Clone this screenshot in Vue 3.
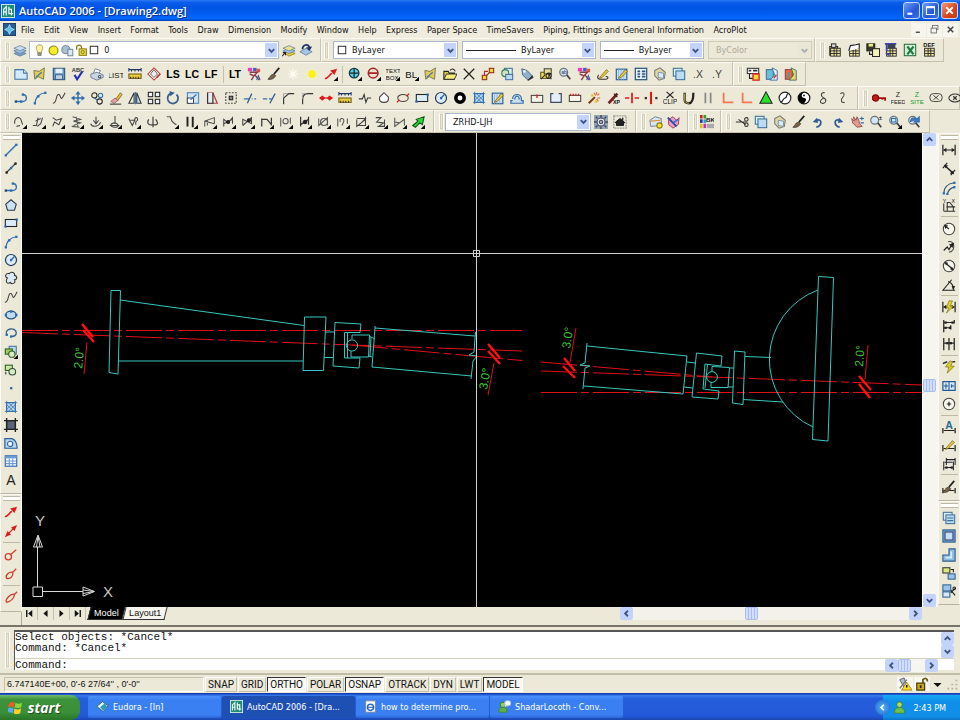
<script setup>
import { ref } from 'vue'

// Small drawing helpers: every glyph lives in a 16 x 16 box.
const p = (d, s = '#222', w = 1.2, f = 'none') => `<path d="${d}" stroke="${s}" stroke-width="${w}" fill="${f}"/>`
const r = (x, y, w, h, f = 'none', s = '#222', sw = 1.2) => `<rect x="${x}" y="${y}" width="${w}" height="${h}" fill="${f}" stroke="${s}" stroke-width="${sw}"/>`
const c = (x, y, q, f = 'none', s = '#222', sw = 1.2) => `<circle cx="${x}" cy="${y}" r="${q}" fill="${f}" stroke="${s}" stroke-width="${sw}"/>`
const e = (x, y, a, b, f = 'none', s = '#222', sw = 1.2) => `<ellipse cx="${x}" cy="${y}" rx="${a}" ry="${b}" fill="${f}" stroke="${s}" stroke-width="${sw}"/>`
const t = (x, y, v, n = 8, f = '#111', b = 400, len = 'middle') => `<text x="${x}" y="${y}" font-size="${n}" fill="${f}" font-weight="${b}" text-anchor="${len}">${v}</text>`
const dot = (x, y, f = '#2a6cb0') => `<rect x="${x - 1.2}" y="${y - 1.2}" width="2.6" height="2.6" fill="${f}"/>`
const fly = p('M16 11V16H11z', 'none', 0, '#000')

const BL = '#2f6fae', NV = '#1c3566', LB = '#bcdcf4', YE = '#e8cf3c', RD = '#e01818'
const pencil = p('M5 11L12 3L14 5L7 12L4 13z', '#6a5210', 0.8, YE)
const pages = r(1.5, 1.5, 10, 9, '#dcecf8', '#3d6f9c') + r(4.5, 4.5, 10, 10, LB, '#3d6f9c')
const hatch = r(3, 3, 10, 10, LB, BL) + p('M3 1V15M13 1V15M1 3H15M1 13H15M5 13L13 5M3 11L11 3M5 3L13 11M3 5L11 13', BL, 0.9)
const gauge = p('M1 3H15', NV, 1.4) + p('M1 5V1M15 5V1M4 3V5M8 3V5M12 3V5', NV) + r(1, 8, 14, 5, YE, '#7a5b14') + p('M3 13V11M6 13V11M9 13V11M12 13V11', '#333')
const match = r(1, 1, 5, 4, '#e83cb8', 'none') + r(7, 1, 4, 4, '#3a60d0', 'none') + r(11, 2, 4, 4, '#e05838', 'none') + p('M3 6L12 6L9 9L14 15M3 8L8 10L5 15', '#903848', 1.6) + p('M11 15L13 10L15 15', '#2b5aa8')
const openIcon = p('M1 4L7 5L13 1L12 14L6 11L2 14z', '#6a7440', 1, '#e4c95c') + p('M3 12L10 6', '#4677aa', 1.4)
const dim = p('M1 2V14M15 2V14M2 8H14', '#222', 1.4) + p('M5 5.5L1.5 8L5 10.5zM11 5.5L14.5 8L11 10.5z', 'none', 0, '#222')
const brush = p('M14 1L8 8', '#222', 2) + p('M8 8L5 9Q3 12 1 14Q7 15 10 10z', '#333', 0.8, '#7b6142')
const redArrow = p('M1 13C4 14 6 9 9 7', RD, 1.8) + p('M15 2L7 4L12 9z', 'none', 0, RD)
const mag = c(6.5, 6, 4.5, '#d2e6f6', '#6b7680', 1.4) + p('M10 9L14 14', '#444', 2)
const lay = p('M8 9L15 12L8 15L1 12z', '#54749a', 0.8, '#7da2c8') + p('M8 6L15 9L8 12L1 9z', '#54749a', 0.8, '#a4c4e0') + p('M8 3L15 6L8 9L1 6z', '#54749a', 0.8, '#c9def0')
const grid = r(3, 6, 11, 9, '#f0e6a4', '#222', 1) + p('M3 9H14M3 12H14M7 6V15M10 6V15', '#222', 1)
const wand = p('M2 14L9 7', '#7a3c14', 2.4) + p('M11 1V4M14 3L12 5M15 8H12M8 2L10 5M13 12L11 9', '#e0602a', 1.2) + dot(6, 5, '#f0c020') + dot(10, 12, '#f0c020')

const I = {
  layers: lay,
  layerState: p('M8 6L15 10L8 14L1 10z', '#54749a', 0.8, '#a4c4e0') + p('M4 7C4 2 10 0 12 5', NV, 2) + p('M12 9L8 5L15 4z', 'none', 0, NV),
  layerObj: p('M8 9L15 12L8 15L3 12z', '#8a7c10', 0.8, YE) + p('M8 6L15 9L8 12L1 9z', '#54749a', 0.8, '#a4c4e0') + p('M8 3L15 6L8 9L1 6z', '#54749a', 0.8, '#ece48c') + p('M0 15L4 11M1 11H4V14', '#222'),
  bulb: p('M8 1C4 1 3 5 5 8L6 11H10L11 8C13 5 12 1 8 1z', '#a08f2c', 1, '#fbf3a0') + r(6, 11, 4, 3, '#999', '#666', 0.8),
  sun: c(8, 8, 5.5, '#f6ee26', '#8a8420', 1.3),
  freeze: c(6, 7, 5, '#a8bfd4', '#6d8398') + r(8.5, 6.5, 6, 8, '#dde8f2', '#6d8398'),
  lock: p('M2 7V3Q5 0 8 3V7', '#8a7c10', 1.6) + r(5, 6, 9, 8, '#e7dc4a', '#8a7c10') + c(9.5, 10, 2, 'none', '#8a7c10'),
  swatch: r(2, 2, 12, 12, '#fff', '#222', 1.5),
  new: p('M1 3H11L15 7V14H1z', '#41739e', 1.2, '#d4e9fa') + p('M11 3V7H15', '#41739e', 1.2, '#fff'),
  open: openIcon,
  save: r(1.5, 1.5, 13, 13, '#6c9ac8', '#2b5278') + r(4, 2, 8, 5, '#e4f0fa', 'none') + r(4, 9, 8, 5, '#c4d4e4', '#2b5278', 0.8),
  spell: t(8, 6, 'ABC', 6.5, '#333', 700) + p('M4 9L7 14L13 5', '#2430b8', 2.4),
  print: p('M4 7L6 2L12 4L10 8', '#687890', 1, '#fff') + p('M1 8L8 6L15 9V12L8 15L1 12z', '#687890', 1, '#cbd5e2') + c(11, 11, 1.4, '#fff', '#456'),
  list: t(8, 12, 'LIST', 9, '#111'),
  gauge,
  diamond: p('M8 1L15 8L8 15L1 8z', '#b83c34', 1.2, '#fff') + p('M8 3L12 8L8 12L4 8z', '#555', 1, '#eee') + p('M11 12L15 8', '#b83c34', 2),
  LS: t(8, 13, 'LS', 12, '#000', 700), LC: t(8, 13, 'LC', 12, '#000', 700), LF: t(8, 13, 'LF', 12, '#000', 700), LT: t(8, 13, 'LT', 12, '#000', 700),
  match, brush,
  star: p('M8 2V14M2 8H14M4 4L12 12M12 4L4 12', '#fffef2', 1.3),
  sunny: p('M8 1V15M1 8H15M3 3L13 13M13 3L3 13', '#faf6a0', 1.4) + c(8, 8, 4.4, '#fbf314', 'none'),
  redArrow: redArrow + fly,
  plusC: c(7, 7, 5.5, '#58d4e4', '#173a4a', 1.4) + p('M7 2V12M2 7H12', '#222', 1.4) + fly,
  minusC: c(7, 7, 5.5, '#f0e0d4', '#a82020', 1.8) + p('M2 7H12', '#a82020', 2) + fly,
  textbox: t(8, 7, 'TEXT', 7) + t(7, 15, 'BOX', 7) + fly,
  bl: t(7, 12, 'BL', 11) + fly,
  folder: p('M1 5H6L7 7H13V14H1z', '#222', 1.2, '#dcd048') + p('M1 14L4 8H16L13 14z', '#222', 1, '#f4ec7c') + p('M8 4C10 1 13 2 14 5', '#222'),
  xx: p('M2 2L14 14M14 2L2 14', '#222', 1.4),
  nodes: r(9.5, 1.5, 5, 5, '#f2da2c', '#8c2c1c') + r(1.5, 9.5, 5, 5, '#f2da2c', '#8c2c1c') + p('M6 10L10 6M4 9V5H8', '#b03020', 1.3),
  shapes: r(5, 1.5, 9, 8, '#dcebf8', '#47719a') + c(6, 7, 4, '#cfe4c0', '#3c7a5c') + r(6.5, 8.5, 8, 6, LB, '#47719a'),
  tag: p('M2 2L8 4L14 10L9 15L3 9z', '#3d5f82', 1, '#8fb0cc') + p('M9 15L14 10L15 12L10 15z', '#333', 1, '#333') + dot(5, 5, '#fff'),
  block: r(2, 6, 9, 7, '#f3e152', '#56511a') + r(6, 2, 8, 6, '#e8dd98', '#444') + c(11, 10, 3, 'none', '#222') + p('M2 14L7 9M11 7L14 14', '#222'),
  find: mag + t(7, 8, 'ab', 6, '#235'),
  pencilC: p('M3 9C1 12 2 14 5 14H11C15 14 14 10 11 11', '#333') + pencil,
  editB: r(1.5, 2.5, 12, 12, '#cde1f3', '#31659a', 1.4) + p('M4 2V15M7 2V15M10 2V15', '#82aacb', 0.8) + pencil,
  calc: r(1.5, 1.5, 13, 13, '#eef4fa', '#2a5480', 1.4) + p('M4 5H7M9 5H13M4 8H7M9 8H13M4 11H7M9 11H13', '#2a5480', 1.8),
  paste: p('M2 4L8 1L14 6L13 13L7 15L2 10z', '#777', 1.2, '#e0d6a4') + p('M6 6L12 7L12 13L6 12z', '#6b8fae', 1, '#dcebf7'),
  pages,
  dx: t(8, 13, '.X', 12, '#444'), dy: t(8, 13, '.Y', 12, '#444'),
  sheet: r(1.5, 1.5, 13, 6, '#fff', '#333') + p('M3 4H6M8 4H13', '#333', 2) + p('M4 8V13H8', '#222') + r(8, 8, 7, 7, '#f4d838', '#d82c20', 1.6),
  doc1: r(1.5, 3, 8, 11, '#66c0d8', '#3f6f98') + p('M8 1L14 4V15H6L11 9z', '#33679a', 1, '#e6f4fb') + p('M10 13L13 9', '#d03030', 1.6),
  doc2: r(1.5, 3, 8, 11, '#e86a3c', '#983f3f') + p('M8 1L14 4V15H6L11 9z', '#336a7a', 1, '#ecd860') + p('M4 13L6 6', '#33a0c0', 1.8),
  pline: p('M2 12H10C16 12 15 4 10 4', BL, 1.6) + dot(2, 12, '#174a78') + dot(10, 4) + dot(8, 12),
  arc: p('M2 14C3 8 6 3 14 2', BL, 1.4) + dot(2, 14) + dot(14, 2) + dot(6, 6),
  spline: p('M1 14C6 14 4 3 8 4C11 6 9 14 15 2', '#444', 1.2),
  move: p('M8 1V15M1 8H15', BL, 1.6) + p('M8 0L5 4H11zM8 16L5 12H11zM0 8L4 5V11zM16 8L12 5V11z', 'none', 0, BL),
  copy: c(5, 5, 3, 'none', '#222') + c(12, 5, 2.5, 'none', BL) + c(11, 12, 3, 'none', '#222') + p('M5 8L9 11', BL),
  erase: p('M8 9L13 2L15 4L10 11z', '#6a4e10', 0.8, '#e8bd38') + p('M2 12L7 8L10 11L6 14z', '#8a5060', 0.8, '#e6a0a6') + p('M1 15H14', '#333'),
  mirror: p('M7 2V14H1z', '#333') + p('M10 2V14H15z', '#333', 1.2, LB) + p('M8.5 1V15', BL),
  array: r(1.5, 1.5, 5, 5, '#eef3f8') + r(9.5, 1.5, 5, 5, '#eef3f8') + r(1.5, 9.5, 5, 5, '#eef3f8') + r(9.5, 9.5, 5, 5, '#eef3f8'),
  rotate: p('M12 4A6 6 0 1 1 5 3', '#39618f', 2) + p('M4 0L10 2L5 6z', 'none', 0, '#39618f'),
  scale: r(1.5, 2, 13, 12, '#d0e4f6', BL, 1) + r(1.5, 8, 7, 6, '#fff', '#333', 1) + p('M5 10L12 4', BL),
  stretch: p('M3 2H9L14 14H3z', '#b83848', 1.4) + p('M3 2V14H9V2', '#333', 1.4, '#e8eef4'),
  dotted: `<rect x="2" y="2" width="12" height="12" fill="none" stroke="#444" stroke-width="1.3" stroke-dasharray="2 1.5"/>` + r(6, 6, 4, 4, '#888', '#222'),
  trim: p('M1 9H7M10 9H11M13 9H15', BL, 1.4) + p('M5 14L10 3', '#2c5c8c', 1.4),
  extend: p('M1 9H6M8 9H11', BL, 1.4) + p('M9 14L15 3', '#2c5c8c', 1.4),
  chamfer: p('M3 15V8L9 3H15', '#333', 1.3) + p('M3 7V3H8', '#999', 1),
  fillet: p('M3 15V10Q3 3 9 3H15', '#333', 1.3) + p('M3 9V3H6', '#999', 1),
  redArrows: p('M1 8H15', RD, 1.3) + p('M0 8L4 5V11zM7 8L4 5V11zM16 8L12 5V11zM9 8L12 5V11z', 'none', 0, RD),
  breakL: p('M1 9H5L7 4L9 13L11 8H15', '#333'),
  drop: p('M8 2L13 7Q14 13 8 13Q2 13 3 7z', '#444', 1.2, '#fff'),
  ellR: e(8, 8, 6, 4, 'none', '#444') + p('M1 13L4 10M12 6L15 3', RD, 1.6),
  rect: r(1.5, 4, 13, 8, '#dcebf8', '#222') + dot(1.6, 12) + dot(14.4, 4),
  circle: c(8, 8, 6.3, '#dcebf8', '#223c5c', 1.4) + p('M8 8L12 4', BL, 1.6) + dot(8, 8),
  donut: c(8, 8, 4.8, '#fff', '#000', 4),
  hatch,
  offset: p('M3 9A4.5 4.5 0 1 1 13 9V11H15V14H1V11H3', '#3a6ea5', 1.4, '#cde1f3') + p('M6 10A2.5 2.5 0 1 1 10 10', '#3a6ea5', 1.3),
  box1: r(1.5, 5, 13, 8, '#f6f4ea', '#444') + p('M8 4V8', RD, 1.5), box2: p('M5 3H2V13H14V3H11', '#3c4c66', 1.4, '#e6eef8'), box3: r(1.5, 5, 13, 7, '#f6f4ea', '#444') + p('M3 5V3M6 5V3M9 5V3M12 5V3', RD, 1.4),
  wand, wandXp: p('M3 14L13 3', '#7a1c24', 3) + p('M9 3L13 7', '#222') + t(12, 15, 'XP', 6, '#111', 700),
  brk1: p('M0 8H5M11 8H16', RD, 1.6) + p('M8 2V14', RD, 2), brk2: p('M8 1V15', RD, 2.4) + dot(2, 8, '#333') + dot(14, 8, '#333'),
  xclip: p('M4 1L12 8M12 1L4 8', '#222') + t(8, 15, 'CLIP', 7.5, '#111'),
  ucup: p('M3 2V10Q3 14 8 14Q13 14 13 2', '#222', 2.6) + p('M3 3V10Q3 14 8 14', '#d8c040', 1),
  par: p('M5 2V14M11 2V14', '#888', 2), ell: p('M3 2V13H14', '#f07850', 2),
  tri: p('M8 1L15 14H1z', '#222', 1.2, '#28e028'),
  yinO: c(8, 8, 6.7, '#fff', '#222', 1.3) + p('M12 3C9 3 11 7 8 8S5 14 3 12', '#222', 1.4),
  yin: c(8, 8, 6.7, '#000', '#111', 1.3) + p('M8 2A6 6 0 0 1 8 14C12 10 10 8 8 8C4 7 5 3 8 2z', 'none', 0, '#fff') + c(8, 5, 1, '#000', 'none'),
  eight: p('M10 2C5 1 5 6 9 8S11 15 7 14S6 9 9 8', '#444'), ess: p('M6 3C10 0 12 4 9 7S7 14 11 13', '#444'),
  key: c(4, 8, 3.6, '#c41414', '#7a0808') + p('M8 8H15V11M12 8V10', '#a01010', 2),
  zfeed: t(8, 7, 'Z', 8, '#222') + t(8, 15, 'FEED', 6.5, '#222'), zsite: t(8, 7, 'Z', 8, '#1d9c2c') + t(8, 15, 'SITE', 7, '#1d9c2c'),
  pill: `<rect x="1" y="3" width="14" height="9" rx="4" fill="none" stroke="#333"/>` + p('M5 5L11 10M11 5L5 10', '#333', 1), pill2: e(8, 8, 7, 4.5, 'none', '#333') + p('M6 6L10 10M10 6L6 10', '#333', 1.4),
  s0: p('M2 10C1 3 7 1 9 5L11 11M4 13L8 12', '#444') + fly, s1: p('M1 12L5 12L7 3M4 7L10 4M6 13L10 10L12 3', '#444') + fly,
  s2: p('M2 3L6 6L12 4L9 11L4 8L2 13', '#444') + fly, s3: p('M3 2L12 5L4 7L12 9L4 12M2 13L11 14M7 2L9 13', '#555') + fly,
  s4: p('M8 2V10M2 10C4 15 12 13 13 8M5 6L8 10L11 6', '#444') + fly, s5: p('M8 1V9C2 9 2 14 8 14S12 10 8 9M2 12H13', '#444') + fly,
  s6: p('M2 4L6 12L9 6H4M9 6C8 2 13 2 12 6L10 8V11', '#444') + fly, s7: p('M8 2V14M3 5C0 11 5 12 8 11M11 5C16 11 11 12 8 11', '#444', 1.4),
  s8: p('M2 2H6L8 7L11 10L13 11', '#555', 1.4) + fly, s9: p('M4 2V13M10 2V14', '#222', 2.2) + fly,
  s10: p('M2 13V7L13 3V10M2 7L13 10M5 6V12', '#555') + fly, s11: p('M2 13V5L7 9L12 3V10M2 10L12 5', '#444') + c(7, 8, 1.8, '#222') + fly,
  s12: p('M2 12V5L12 10V3L2 12', '#444') + c(9, 6, 1.8, '#222') + fly, s13: p('M2 4V13M2 5H8L13 11M13 3V12', '#333', 1.4) + fly,
  s14: p('M2 3V13M13 3V10', '#555') + c(7.5, 7, 3, 'none', '#555') + fly, s15: p('M3 2V13M12 2V11M3 11L12 5', '#333', 1.4) + c(8, 8, 2, '#222') + fly,
  s16: p('M2 4V12L12 3V12', '#555') + c(8, 8, 4, 'none', '#555') + fly, s17: p('M2 4V13M5 8C3 4 9 2 9 7L7 12M13 4V10', '#555') + fly,
  s18: p('M2 4L12 4L4 12H12V2M2 5V13L12 5', '#444') + fly, s19: p('M2 3H8L3 8L11 9L5 13H12V5', '#444') + fly, s20: p('M2 3V13L13 5V12M2 8L7 9', '#555') + fly,
  green: p('M2 12L8 7L6 5L15 2L13 11L10 9L5 14z', '#124c12', 1.2, '#2cd83c') + fly,
  gear: `<rect x="0" y="0" width="16" height="16" fill="#8fa4b4"/>` + c(8, 8, 4.5, '#e4ecf2', '#445') + c(8, 8, 2, '#9ab', '#445') + p('M8 0V3M8 13V16M0 8H3M13 8H16M2 2L4 4M14 2L12 4M2 14L4 12M14 14L12 12', '#445', 1.6),
  house: `<rect x="1" y="1" width="14" height="14" fill="none" stroke="#999" stroke-width="1.6" stroke-dasharray="2 1"/>` + p('M3 8L8 4L13 8V9H12V12H4V9H3z', '#111', 1, '#222') + p('M11 3V6', '#222', 1.6),
  dcenter: p('M1 6L7 2L14 4V12L2 13z', '#667a98', 1, '#dce4ee') + c(12, 12, 3, '#f6e33a', '#8a7a10') + p('M2 7L13 6', '#e09030'),
  heart: p('M3 5L8 2L12 6L15 3L14 11L8 15L3 11z', '#b02a58', 1, '#e8a0c0') + p('M2 3L8 9L12 13', '#2848a8', 2) + p('M14 5L8 9', '#3868d0', 2),
  palette: r(0, 0, 3, 4, '#d02020', 'none') + r(4, 0, 3, 4, '#20a030', 'none') + r(0, 5, 3, 4, '#2030c0', 'none') + r(4, 5, 3, 4, '#20a8c0', 'none') + r(0, 10, 3, 5, '#e0c020', 'none') + r(4, 10, 3, 5, '#c030c0', 'none') + r(8, 10, 8, 5, '#aaa', 'none') + t(12, 8, 'BK', 7, '#111', 700),
  cut: p('M1 8H12M4 5L12 11', '#333', 1.3) + c(13, 5, 2, 'none', '#333') + c(13, 11, 2, 'none', '#333'),
  undo: p('M6 14C13 12 13 4 6 6', '#2c5896', 2) + p('M2 8L7 3L8 9z', 'none', 0, '#2c5896'), redo: p('M10 14C3 12 3 4 10 6', '#2c5896', 2) + p('M14 8L9 3L8 9z', 'none', 0, '#2c5896'),
  pan: p('M2 4L5 7L4 2L7 6L8 2L10 6L11 10L14 13L8 14L3 9z', '#8a4c48', 1, '#e09a90') + p('M11 4H16M13.5 2V6M12 9H16', BL, 1.3),
  zoomR: mag + t(13, 6, '±', 7, '#111', 700), zoomW: mag + r(4, 4, 5, 4, 'none', BL) + fly, zoomP: mag + p('M4 8C4 3 9 2 11 5L14 2V8H8L10 6', BL, 1.2, '#4678b4'),
  x1: r(2, 4, 9, 10, '#c8ba6c', '#333') + r(4, 1, 5, 4, '#ddd', '#333') + grid, x2: grid + p('M2 9L4 3L10 2L14 1V6', '#222', 1.3, '#fff'),
  x3: r(1, 1, 9, 8, '#3a3a2a', '#222') + r(3, 1, 5, 3, '#f2ec88', 'none') + r(7.5, 6.5, 8, 9, '#f4f0bb', '#222') + p('M4 10V13H7', '#222'), x4: grid + p('M1 1H14M3 1V9M2 11L6 14', '#3b48b8', 2) + r(4, 1, 9, 5, '#3c4050', 'none'),
  x5: r(1.5, 1.5, 13, 13, '#d6ecd9', '#287040') + p('M5 4L12 13M12 4L5 13', '#1d7c3c', 2.4), x6: t(8, 5, 'DEF', 6.5, '#111', 700) + grid,
  line: p('M2 14L14 2', BL, 1.6) + dot(2, 14) + dot(14, 2), xline: p('M2 14L14 2', '#3c4750', 1.4) + dot(3, 13, '#222') + dot(13, 3, '#222') + dot(8, 8),
  polygon: p('M8 2L14 7L12 14H4L2 7z', '#2b3b50', 1.3, '#cfe0f2'), cloud: p('M4 8C0 7 2 2 6 3C8 0 13 2 12 5C16 6 15 10 12 10C14 14 9 16 7 13C4 16 1 12 4 8z', '#333', 1.2, '#dceaf6'),
  ellipse: e(8, 8, 6, 4.4, LB, '#27507c', 1.6) + dot(2, 8) + dot(14, 8) + dot(8, 4), earc: p('M3 10C0 2 14 1 14 8C14 12 10 12 8 12', '#39618f', 1.6) + dot(3, 10) + dot(8, 12),
  insert: r(6, 1.5, 8, 9, LB, '#47719a') + r(1.5, 4.5, 8, 6, '#9bd05c', '#2d5a1c') + c(9, 10.5, 3.6, '#d9ecc4', '#2d5a1c') + fly,
  mkblock: r(1.5, 2.5, 8, 6, '#cde7a8', '#2d5a1c') + c(9.5, 10, 3.8, '#d9ecc4', '#2d4a3c') + p('M2 10V13', '#333'),
  point: r(7, 7, 2.5, 2.5, '#1d5c8c', 'none'),
  gradient: r(3, 3, 10, 10, '#5a6478', '#222') + p('M3 0V16M13 0V16M0 3H16M0 13H16', '#222', 1.6),
  region: p('M1 14V3H9Q15 5 15 14z', '#2d6298', 1.4, '#b8d4ee') + c(7, 9, 3, '#f1f6fb', '#2d6298'),
  table: r(1.5, 2, 13, 12, '#fff', '#3a70b8', 1.4) + r(1.5, 2, 13, 3, '#6c9cd4', 'none') + p('M2 8H14M2 11H14M6 5V14M10 5V14', '#6c9cd4'),
  A: t(8, 14, 'A', 16, '#222'),
  rArrow: redArrow, rArrow2: p('M3 13L13 3', RD, 1.4) + p('M15 1L8 4L12 8zM1 15L8 12L4 8z', 'none', 0, RD),
  rC1: c(5, 10, 3.6, 'none', '#d04030', 1.5) + p('M7 8L14 2', '#d04030', 1.5), rC2: p('M3 13C1 9 6 5 10 6C11 11 7 14 3 13zM10 6L14 2', '#d04030', 1.5), rC3: p('M3 14C0 12 8 3 12 5C12 9 7 14 3 14zM11 6L15 2', '#d04030', 1.5),
  dLin: dim, dAl: p('M3 4L13 13', '#222', 1.6) + p('M1 7L6 1M10 15L15 9', '#222', 1.3) + p('M2 3L7 4L4 7zM14 14L9 13L12 10z', 'none', 0, '#222'),
  dArc: p('M2 14C2 8 6 3 14 2M6 15C7 11 9 8 14 7', '#29536f', 1.4) + dot(14, 2) + dot(14, 7) + dot(2, 14) + dot(6, 15),
  dOrd: p('M2 5V14M2 14H15M6 14V4H9L13 9V14M5 9H15', '#333') + t(3, 5, 'Y', 6) + t(13, 5, 'X', 6),
  dRad: c(8, 8, 6.5, '#f8f6ec', '#444') + p('M8 8L4 5', '#222', 1.4) + p('M2 3L7 4L4 8z', 'none', 0, '#222'), dJog: p('M7 2C15 0 16 12 8 14', '#444') + p('M2 12L6 8L8 11L12 4', '#222', 1.3) + p('M14 3L8 5L12 9z', 'none', 0, '#222'),
  dDia: c(8, 8, 6.5, '#f8f6ec', '#444') + p('M3 4L13 12', '#222', 1.4) + dot(5, 5, '#222') + dot(11, 11, '#222'), dAng: p('M15 14H1L11 2M7 4Q13 6 13 13', '#222', 1.3) + p('M11 9H15L13 14z', 'none', 0, '#222'),
  qDim: dim + p('M8 1L5 9H8L5 15L13 7H9L12 1z', '#7a6d10', 0.8, '#e8da28'), dBase: p('M2 1V15M14 1V5M10 7V12M2 4H13M2 10H9', '#222', 1.4) + dot(4, 4, '#222') + dot(12, 4, '#222') + dot(4, 10, '#222') + dot(9, 10, '#222'),
  dCont: p('M2 1V15M8 1V15M14 1V15M2 7H14', '#222', 1.4) + dot(6, 7, '#222') + dot(10, 7, '#222'), qL: p('M9 1L4 8H8L6 15L14 7H10L12 2z', '#7a6d10', 0.8, '#d8d028') + p('M1 4L6 2M12 2H15', '#333', 1.8),
  tol: r(1, 3, 14, 10, '#d7e9f8', '#215a90', 1.4) + p('M8 3V13M2 8H7M4.5 5V11M10 8H14M11 6V10', '#215a90', 1.2), cen: c(8, 8, 6.5, '#f8f6ec', '#444') + p('M8 5.5V10.5M5.5 8H10.5', '#222', 1.4),
  dEdit: p('M1 9V15M15 9V15M2 12H14', '#222', 1.4) + t(8, 10, 'A', 12, '#2a6a90', 700), dTed: p('M1 8V15M15 8V15M2 12H14', '#222', 1.4) + pencil, dUpd: p('M2 5V15M13 5V15M3 12H12M3 6H12M5 1V9M15 1V9M5 3H15', '#223', 1.2) + dot(5, 12, '#222') + dot(11, 12, '#222'),
  dSty: p('M1 9V15M15 9V15M2 12H14', '#222', 1.4) + brush, v1: pages + p('M6 8H13M6 11H13', '#3d6f9c'), v2: r(1, 1, 14, 14, '#6fa0cc', '#2f618f') + r(3.5, 3.5, 9, 9, '#c6e0f6', '#447'),
  v3: p('M8 1H15V15H1V8H8z', '#2f618f', 1.3, '#8fbbe0') + p('M10.5 4V11H4', '#d8ebfa', 2), v4: r(1, 2, 8, 6, '#dce878', '#333') + r(7, 9, 8, 6, '#9cc4ea', '#2f618f') + p('M10 4H13V7', '#222', 1.3), v5: r(1, 1, 9, 7, '#9cc4ea', '#2f618f') + r(1, 9, 8, 6, '#d6e8f8', '#2f618f') + p('M10 10L15 5M10 7L15 13', '#222', 1.3) + c(14, 5, 1.5),
  acad: r(0.5, 0.5, 15, 15, '#1c8c74', '#d4ece4', 1.2) + p('M3 13V6L6 3V13M3 9H6M9 3V11H14M9 6H12V13', '#fff', 1.3),
  doc: r(0.5, 0.5, 15, 15, '#225e9a', '#12324f', 1) + p('M8 2L10 6L14 8L10 10L8 14L6 10L2 8L6 6z', '#fff', 0.6, '#5ac4ec'),
  eudora: p('M1 8L8 2L15 7L9 14z', '#1b5a80', 1, '#dff2f8') + p('M5 9L11 4L14 9L9 13z', 'none', 0, '#3398b4'), ie: r(2, 1, 12, 14, '#fff', '#7188a8') + c(8, 9, 3.8, 'none', '#2b68b8', 1.8) + p('M4 9H12', '#2b68b8', 1.4),
  buddy: c(8, 4.5, 3.5, '#a4dc78', '#3a7a28') + p('M2 15Q1 8 8 8Q15 8 14 15z', '#3a7a28', 0.8, '#6cc04c'),
  buddyChat: c(6, 6, 3.3, '#8cd060', '#3a7a28') + p('M1 15Q1 9 6 9Q12 9 11 15z', '#3a7a28', 0.8, '#5cb440') + e(12, 4, 4, 3.4, '#f2f8fc', '#9cb4cc') + p('M9 6L8 9L11 7z', 'none', 0, '#f2f8fc'),
  flag: p('M1 4Q4 1 7 3L6 8Q3 6 0 8z', 'none', 0, '#f05a28') + p('M8 3Q11 5 15 3L14 8Q11 9 7 8z', 'none', 0, '#8cd63c') + p('M0 9Q3 7 6 9L5 14Q2 12 -1 14z', 'none', 0, '#58a8f4') + p('M7 9Q10 11 14 9L13 14Q9 16 6 14z', 'none', 0, '#fcd028'),
  comm: p('M2 3L7 1L10 9L7 12z', '#556', 1, '#b4bed0') + p('M2 13L10 3', '#777', 1.6) + p('M10 6L16 15H4z', '#8a6d10', 0.8, '#fbdc20') + p('M10 9V12', '#111', 1.6),
  padlock: p('M9 7V3Q12 0 14 3V5', '#6a5a10', 2) + r(2, 7, 9, 8, '#c8a81c', '#4a3c08', 1.4) + r(5.5, 9.5, 2, 3, '#222', 'none'),
  first: p('M4 3V13', '#111', 2) + p('M12 3V13L6 8z', 'none', 0, '#111'), prev: p('M11 3V13L5 8z', 'none', 0, '#111'), next: p('M5 3V13L11 8z', 'none', 0, '#111'), last: p('M12 3V13', '#111', 2) + p('M4 3V13L10 8z', 'none', 0, '#111'),
  up: p('M4 10L8 6L12 10', '#3c5484', 2.6), down: p('M4 6L8 10L12 6', '#3c5484', 2.6), left: p('M10 4L6 8L10 12', '#3c5484', 2.6), right: p('M6 4L10 8L6 12', '#3c5484', 2.6),
  wmin: p('M3 12H9', '#fff', 2.6), wmax: r(3, 3.5, 10, 9.5, 'none', '#fff', 1.2) + p('M3 4H13', '#fff', 2.4), wclose: p('M4 4L12 12M12 4L4 12', '#fff', 2.2),
  dmin: p('M4 12H10', '#444', 2), drest: r(5, 2, 8, 6, 'none', '#666') + r(3, 6, 8, 7, '#f4f2e8', '#666'), dclose: p('M4 4L12 12M12 4L4 12', '#444', 2.2),
  caret: p('M3 6H13L8 11z', 'none', 0, '#111'), grip: p('M14 2V4M14 7V9M14 12V14M9 7V9M9 12V14M4 12V14', '#b8b4a0', 2.4), chevron: p('M10 4L6 8L10 12', '#fff', 2.4),
}

const words = (s) => s.split(' ')
const menus = ['File', 'Edit', 'View', 'Insert', 'Format', 'Tools', 'Draw', 'Dimension', 'Modify', 'Window', 'Help', 'Express', 'Paper Space', 'TimeSavers', 'Piping, Fittings and General Information', 'AcroPlot']
const exportBar = words('x1 x2 x3 x4 x5 x6')
const stdBar = words('new open save spell print list gauge diamond LS LC LF | LT match brush star sunny redArrow | plusC minusC textbox bl open folder xx nodes shapes tag block find match pencilC editB calc paste pages dx dy')
const sheetBar = words('sheet doc1 doc2')
const modifyBar = words('pline arc spline move copy erase mirror array rotate scale stretch dotted trim extend chamfer fillet redArrows gauge breakL drop ellR rect circle donut hatch editB offset box1 box2 box3 wand wandXp brk1 brk2 xclip ucup par ell ell tri yinO yin eight ess')
const siteBar = words('key zfeed zsite pill pill2')
const pipeBar = words('s0 s1 s2 s3 s4 s5 s6 s7 s8 s9 s10 s11 s12 s13 s14 s15 s16 s17 s18 s19 s20 green')
const centerBar = words('dcenter heart')
const editBar = words('cut pages paste brush undo redo pan zoomR zoomW zoomP')
const leftDraw = words('line xline pline polygon rect arc circle cloud spline ellipse earc insert mkblock point hatch gradient region table A')
const leftRed = words('rArrow rArrow2 | rC1 rC2 | rC3')
const rightDim = words('dLin dAl dArc dOrd | dRad dJog dDia dAng | qDim dBase dCont | qL tol cen | dEdit dTed dUpd | dSty')
const rightRef = words('v1 v2 v3 v4 v5')

const toggles = ref([
  { n: 'SNAP', on: false }, { n: 'GRID', on: false }, { n: 'ORTHO', on: true }, { n: 'POLAR', on: false }, { n: 'OSNAP', on: true },
  { n: 'OTRACK', on: false }, { n: 'DYN', on: false }, { n: 'LWT', on: false }, { n: 'MODEL', on: true },
])
const tasks = [
  { icon: 'eudora', n: 'Eudora - [In]' },
  { icon: 'acad', n: 'AutoCAD 2006 - [Dra...', on: true },
  { icon: 'ie', n: 'how to determine pro...' },
  { icon: 'buddyChat', n: 'ShadarLocoth - Conv...' },
]
const command = ref('')
</script>

<template>
  <div class="app">
    <header class="title">
      <svg class="ic big" viewBox="0 0 16 16" v-html="I.acad" />
      <h1>AutoCAD 2006 - [Drawing2.dwg]</h1>
      <button class="win" aria-label="Minimize"><svg viewBox="0 0 16 16" v-html="I.wmin" /></button>
      <button class="win" aria-label="Maximize"><svg viewBox="0 0 16 16" v-html="I.wmax" /></button>
      <button class="win close" aria-label="Close"><svg viewBox="0 0 16 16" v-html="I.wclose" /></button>
    </header>

    <nav class="menu">
      <svg class="ic" viewBox="0 0 16 16" v-html="I.doc" />
      <div class="items">
        <button v-for="m in menus" :key="m">{{ m }}</button>
      </div>
      <div class="mdis">
        <button v-for="d in ['dmin', 'drest', 'dclose']" :key="d" class="mdi" :aria-label="d"><svg viewBox="0 0 16 16" v-html="I[d]" /></button>
      </div>
    </nav>

    <div class="bars row1">
      <section class="bar">
        <i class="grip" />
        <button class="tool" aria-label="layers"><svg viewBox="0 0 16 16" v-html="I.layers" /></button>
        <div class="combo wide">
          <svg v-for="s in ['bulb', 'sun', 'freeze', 'lock', 'swatch']" :key="s" :class="['ic', s]" viewBox="0 0 16 16" v-html="I[s]" />
          <select aria-label="Layer"><option>0</option></select>
          <span class="arrow"><svg viewBox="0 0 16 16" v-html="I.down" /></span>
        </div>
        <button class="tool" aria-label="layerObj"><svg viewBox="0 0 16 16" v-html="I.layerObj" /></button>
        <button class="tool" aria-label="layerState"><svg viewBox="0 0 16 16" v-html="I.layerState" /></button>
      </section>
      <section class="bar props">
        <i class="grip" />
        <div class="combo">
          <svg class="ic swatch" viewBox="0 0 16 16" v-html="I.swatch" />
          <select aria-label="Color"><option>ByLayer</option></select>
          <span class="arrow"><svg viewBox="0 0 16 16" v-html="I.down" /></span>
        </div>
        <div class="combo">
          <i class="sample" />
          <select aria-label="Linetype"><option>ByLayer</option></select>
          <span class="arrow"><svg viewBox="0 0 16 16" v-html="I.down" /></span>
        </div>
        <div class="combo">
          <i class="sample short" />
          <select aria-label="Lineweight"><option>ByLayer</option></select>
          <span class="arrow"><svg viewBox="0 0 16 16" v-html="I.down" /></span>
        </div>
        <div class="combo off">
          <select aria-label="Plot style" disabled><option>ByColor</option></select>
          <span class="arrow"><svg viewBox="0 0 16 16" v-html="I.down" /></span>
        </div>
      </section>
      <section class="bar">
        <i class="grip" />
        <button v-for="b in exportBar" :key="b" class="tool" :aria-label="b"><svg viewBox="0 0 16 16" v-html="I[b]" /></button>
      </section>
    </div>

    <div class="bars row2">
      <section class="bar">
        <i class="grip" />
        <template v-for="(b, i) in stdBar" :key="i">
          <i v-if="b === '|'" class="sep" />
          <button v-else class="tool" :aria-label="b"><svg viewBox="0 0 16 16" v-html="I[b]" /></button>
        </template>
      </section>
      <section class="bar">
        <i class="grip" />
        <button v-for="b in sheetBar" :key="b" class="tool" :aria-label="b"><svg viewBox="0 0 16 16" v-html="I[b]" /></button>
      </section>
    </div>

    <div class="bars row3">
      <section class="bar">
        <i class="grip" />
        <button v-for="(b, i) in modifyBar" :key="i" class="tool" :aria-label="b"><svg viewBox="0 0 16 16" v-html="I[b]" /></button>
      </section>
      <section class="bar">
        <i class="grip" />
        <button v-for="b in siteBar" :key="b" class="tool" :aria-label="b"><svg viewBox="0 0 16 16" v-html="I[b]" /></button>
      </section>
    </div>

    <div class="bars row4">
      <section class="bar">
        <i class="grip" />
        <button v-for="b in pipeBar" :key="b" class="tool" :aria-label="b"><svg viewBox="0 0 16 16" v-html="I[b]" /></button>
      </section>
      <section class="bar">
        <i class="grip" />
        <div class="combo wide">
          <select aria-label="Style"><option>ZRHD-LJH</option></select>
          <span class="arrow"><svg viewBox="0 0 16 16" v-html="I.down" /></span>
        </div>
        <button class="tool" aria-label="gear"><svg viewBox="0 0 16 16" v-html="I.gear" /></button>
        <button class="tool" aria-label="house"><svg viewBox="0 0 16 16" v-html="I.house" /></button>
      </section>
      <section class="bar">
        <i class="grip" />
        <button v-for="b in centerBar" :key="b" class="tool" :aria-label="b"><svg viewBox="0 0 16 16" v-html="I[b]" /></button>
      </section>
      <section class="bar">
        <i class="grip" />
        <button class="tool" aria-label="palette"><svg viewBox="0 0 16 16" v-html="I.palette" /></button>
      </section>
      <section class="bar">
        <i class="grip" />
        <button v-for="b in editBar" :key="b" class="tool" :aria-label="b"><svg viewBox="0 0 16 16" v-html="I[b]" /></button>
      </section>
    </div>

    <main class="work">
      <aside class="dock left">
        <section class="vbar">
          <i class="vgrip" />
          <button v-for="b in leftDraw" :key="b" class="tool" :aria-label="b"><svg viewBox="0 0 16 16" v-html="I[b]" /></button>
        </section>
        <section class="vbar">
          <i class="vgrip" />
          <template v-for="(b, i) in leftRed" :key="i">
            <i v-if="b === '|'" class="vsep" />
            <button v-else class="tool" :aria-label="b"><svg viewBox="0 0 16 16" v-html="I[b]" /></button>
          </template>
        </section>
      </aside>

      <div class="center">
        <div class="view">
          <svg class="canvas" viewBox="22 133 900 474" preserveAspectRatio="xMidYMid slice">
            <g class="red">
              <path class="center-line" d="M22 330.500H522M22 332.500L352 345L522 351M352 345L522 360.500" />
              <path class="center-line" d="M541 362L712 377M541 371L712 377L922 385M541 392.500H922" />
              <path d="M87 342L84 374M494 363L488 395M576 328L570 362M868 345L865 379" />
              <path class="thick" d="M82 324L93 337M83 330L94 342M488 344L500 358M488 351L500 364M564 358L575 371M563 366L575 378M859 376L871 390M859 384L870 398" />
            </g>
            <g class="cyan">
              <path d="M111 290.500H120.500L118 374L109 372.500zM120 300L304 325.500M118 361H303" />
              <path d="M304.500 317H326L323.500 370.500H303zM325 332H334M324 357.500H333" />
              <path d="M335 322.500L361 324L360 332.500H344.500V358H360L359 368L333 366zM347.500 332V358" />
              <path d="M352 339V335H369.500L368.500 357H351V351M369 336L375 339M368 356L372 357M371 337L370 357" />
              <circle cx="352" cy="345.500" r="5.600" />
              <path d="M475.500 332L474 352L469 355L477 356L473 361L471 379M375 326V328L475 336M375 328L372 367L472 376" />
              <path d="M587 343L585 363L580 365L590 366L585 368L583 389M587 346L687 356L683 394L584 386M687 362L695 363M684 387L693 388" />
              <path d="M696.500 353L722 356L721 366L705 364L703 389L719 391L718 399L692 397zM707.500 364L705 388" />
              <path d="M712 371V366.500L729.500 367.500L728 387.500H711V382M730 368H734M728 387H733" />
              <circle cx="712" cy="377" r="5.400" />
              <path d="M734.500 351L745 352L743 404.500L732.500 403zM745 356.500L771 357.500M743 399.500L783 402" />
              <path d="M818 290A74 74 0 0 0 813 427M818.500 276.500L833.500 277.500L828 441L812.500 439.500z" />
            </g>
            <g class="dim">
              <text transform="translate(82 369) rotate(-84)">2.0°</text>
              <text transform="translate(487 390) rotate(-80)">3.0°</text>
              <text transform="translate(570 349) rotate(-81)">3.0°</text>
              <text transform="translate(863 367) rotate(-86)">2.0°</text>
            </g>
            <g class="ucs">
              <path d="M33 587H42.500V596.500H33zM37.500 587V547M38 535L33.500 547H42.500zM38 536L36.500 547M38 536L40 547M42 591.500H83M94.500 591.500L83 587V596zM94 591.500L83 590M94 591.500L83 593.500" />
              <text x="40" y="526">Y</text>
              <text x="108" y="597">X</text>
            </g>
            <path class="cross" d="M22 253.500H922M476.500 133V607M473.500 250.500H479.500V256.500H473.500z" />
          </svg>
          <div class="vscroll">
            <button aria-label="Scroll up"><svg viewBox="0 0 16 16" v-html="I.up" /></button>
            <span class="above" /><span class="thumb" /><span class="below" />
            <button aria-label="Scroll down"><svg viewBox="0 0 16 16" v-html="I.down" /></button>
          </div>
        </div>
        <div class="tabs">
          <button v-for="b in ['first', 'prev', 'next', 'last']" :key="b" class="step" :aria-label="b"><svg viewBox="0 0 16 16" v-html="I[b]" /></button>
          <button class="tab on"><span>Model</span></button>
          <button class="tab"><span>Layout1</span></button>
          <span class="fill" />
          <div class="hscroll">
            <button aria-label="Scroll left"><svg viewBox="0 0 16 16" v-html="I.left" /></button>
            <span class="track"><span class="thumb" /></span>
            <button aria-label="Scroll right"><svg viewBox="0 0 16 16" v-html="I.right" /></button>
          </div>
        </div>
      </div>

      <aside class="dock right">
        <section class="vbar">
          <i class="vgrip" />
          <template v-for="(b, i) in rightDim" :key="i">
            <i v-if="b === '|'" class="vsep" />
            <button v-else class="tool" :aria-label="b"><svg viewBox="0 0 16 16" v-html="I[b]" /></button>
          </template>
        </section>
        <section class="vbar">
          <i class="vgrip" />
          <button v-for="b in rightRef" :key="b" class="tool" :aria-label="b"><svg viewBox="0 0 16 16" v-html="I[b]" /></button>
        </section>
      </aside>
    </main>

    <section class="cmd">
      <i class="grip" />
      <div class="cmdbox">
        <div class="history">
          <div class="lines"><p>Select objects: *Cancel*</p><p>Command: *Cancel*</p></div>
          <div class="mini">
            <button aria-label="History up"><svg viewBox="0 0 16 16" v-html="I.up" /></button>
            <button aria-label="History down"><svg viewBox="0 0 16 16" v-html="I.down" /></button>
          </div>
        </div>
        <div class="prompt">
          <label for="cmd">Command:</label>
          <input id="cmd" v-model="command" type="text" autocomplete="off">
          <button aria-label="Prompt left"><svg viewBox="0 0 16 16" v-html="I.left" /></button>
          <span class="thumb" />
          <span class="gap" />
          <button aria-label="Prompt right"><svg viewBox="0 0 16 16" v-html="I.right" /></button>
        </div>
      </div>
    </section>

    <footer class="status">
      <output class="coords">6.747140E+00, 0'-6 27/64'' , 0'-0''</output>
      <button v-for="s in toggles" :key="s.n" :class="['toggle', { on: s.on }]" :aria-pressed="s.on" @click="s.on = !s.on">{{ s.n }}</button>
      <span class="fill" />
      <svg class="ic pale" viewBox="0 0 16 16" v-html="I.comm" />
      <svg class="ic pale" viewBox="0 0 16 16" v-html="I.padlock" />
      <svg class="ic" viewBox="0 0 16 16" v-html="I.caret" />
      <svg class="ic" viewBox="0 0 16 16" v-html="I.grip" />
    </footer>

    <footer class="taskbar">
      <button class="start"><svg viewBox="0 0 16 16" v-html="I.flag" />start</button>
      <button v-for="k in tasks" :key="k.n" :class="['task', { on: k.on }]"><svg viewBox="0 0 16 16" v-html="I[k.icon]" />{{ k.n }}</button>
      <span class="fill" />
      <div class="tray">
        <button class="hide" aria-label="Hide icons"><svg viewBox="0 0 16 16" v-html="I.chevron" /></button>
        <svg class="ic" viewBox="0 0 16 16" v-html="I.buddy" />
        <time>2:43 PM</time>
      </div>
    </footer>
  </div>
</template>

<style>
body { margin: 0; }
</style>

<style scoped>
.app {
  display: flex;
  flex-direction: column;
  min-height: 100vh;
  background: #ece9d8;
  color: #111;
  font-family: "DejaVu Sans Condensed", "Noto Sans", sans-serif;
  font-size: 9px;
  overflow: hidden;
}
*, *::before, *::after { box-sizing: border-box; }
button, select, input {
  font: inherit;
  color: inherit;
  margin: 0;
  padding: 0;
  border: 0;
  background: none;
  border-radius: 0;
}
button { display: flex; align-items: center; justify-content: center; white-space: nowrap; }
svg { display: block; flex: none; font-family: "Liberation Sans", sans-serif; }
.ic { width: 13px; height: 13px; }
.fill { flex: 1; }

.title {
  display: flex;
  align-items: center;
  gap: 4px;
  height: 21px;
  padding: 0 2px 0 1px;
  background: linear-gradient(#2a7bf4 0, #0a5cea 12%, #0054e3 40%, #0162f6 75%, #0368fc 88%, #0040b8 100%);
}
.title .big { width: 14px; height: 14px; }
.title h1 {
  flex: 1;
  margin: 0;
  color: #fff;
  font: 600 11px "Open Sans", sans-serif;
  text-shadow: 1px 1px #0a2f8a;
}
.win {
  width: 17px;
  height: 17px;
  border: 1px solid #c4d8fa;
  border-radius: 3px;
  background: linear-gradient(135deg, #6f9cf5, #2458d8 60%, #3a73ee);
}
.title .win + .win { margin-left: -2px; }
.win svg { width: 13px; height: 13px; }
.win.close { background: linear-gradient(135deg, #f09a7c, #d9431c 60%, #c63b18); }

.menu {
  display: grid;
  grid-template-columns: 13px 730fr 211fr;
  align-items: center;
  height: 17px;
  padding: 0 2px 0 3px;
  background: #efecdd;
}
.items { display: flex; justify-content: space-between; padding-left: 5px; }
.mdis { display: flex; justify-content: flex-end; gap: 1px; }
.mdi { width: 15px; height: 14px; background: #f6f5ee; }
.mdi svg { width: 11px; height: 11px; }

.bars { display: grid; height: 24px; background: #ece9d8; }
.row1 { grid-template-columns: 321fr 494fr 129fr 16fr; }
.row2 { grid-template-columns: 733fr 73fr 154fr; }
.row3 { grid-template-columns: 858fr 102fr; }
.row4 { grid-template-columns: 434fr 202fr 52fr 33fr 209fr 30fr; height: 23px; }
.bar {
  display: flex;
  align-items: center;
  min-width: 0;
  padding: 0 5px 0 4px;
  border-top: 1px solid #fbfaf4;
  border-left: 1px solid #fbfaf4;
  border-right: 1px solid #c5c1ac;
  border-bottom: 1px solid #c5c1ac;
}
.grip {
  flex: none;
  width: 5px;
  height: 17px;
  margin-right: 1px;
  border: solid #fdfcf6;
  border-width: 0 1px;
  outline: 1px solid #d2ceba;
  outline-offset: -2px;
}
.tool { flex: 1 1 0; min-width: 0; height: 20px; }
.tool svg { width: 14px; height: 14px; }
.row3 .bar:last-child .tool { flex: 0 0 19px; }
.sep { flex: none; width: 1px; height: 17px; margin: 0 2px; background: #c5c1ac; }

.combo {
  display: flex;
  align-items: center;
  flex: 1 1 0;
  min-width: 0;
  height: 18px;
  padding: 1px 1px 1px 3px;
  gap: 1px;
  border: 1px solid #a9b8cc;
  background: #fff;
}
.combo select { flex: 1; min-width: 0; height: 14px; padding-left: 4px; appearance: none; }
.combo .ic.swatch { width: 10px; height: 10px; }
.combo .arrow { width: 12px; height: 14px; background: #c3d3fb; display: flex; align-items: center; justify-content: center; }
.combo .arrow svg { width: 11px; height: 11px; }
.row1 .combo.wide { flex: 0 0 250px; margin: 0 1px; }
.row4 .combo.wide { flex: 0 0 146px; }
.props { padding-right: 2px; padding-left: 2px; gap: 4px; }
.props .grip { margin-right: 0; }
.props .combo { flex-grow: 125; }
.props .combo:nth-child(3) { flex-grow: 134; }
.props .combo:nth-child(n+4) { flex-grow: 103; }
.sample { flex: none; width: 50px; height: 1px; background: #222; }
.sample.short { width: 30px; }
.combo.off { background: #ece9d8; border-color: #d0ccb8; color: #aca899; }
.combo.off select { color: #aca899; opacity: 1; }
.combo.off .arrow { background: #e5e2d2; opacity: 0.4; }

.work { flex: 1; display: grid; grid-template-columns: 22px minmax(0, 1fr) 22px; min-height: 0; }
.dock { display: grid; }
.left { grid-template-rows: 361fr 118fr 13fr; border-right: 1px solid #aca899; }
.right { grid-template-rows: 368fr 104fr 20fr; }
.vbar {
  display: flex;
  flex-direction: column;
  align-items: center;
  min-height: 0;
  padding-bottom: 4px;
  border: 1px solid #fbfaf4;
  border-bottom-color: #b8b49f;
}
.vgrip { flex: none; width: 17px; height: 5px; margin: 1px 0; border: solid #bdb9a5; border-width: 1px 0; background: #fff; }
.vbar .tool { width: 20px; height: auto; min-height: 0; }
.vsep { flex: none; width: 17px; height: 1px; margin: 1px 0 2px; background: #bdb9a5; }

.center { display: flex; flex-direction: column; min-width: 0; background: #ece9d8; }
.view { flex: 1; display: flex; min-height: 0; background: #000; }
.canvas { flex: 1 1 0; min-width: 0; height: 100%; }
.red { fill: none; stroke: #e01018; stroke-width: 1; }
.center-line { stroke-dasharray: 36 4 8 4; }
.thick { stroke-width: 2.400; stroke: #ff1010; }
.cyan { fill: none; stroke: #39c8bf; stroke-width: 1; }
.dim text { fill: #38c832; font: 12px "Liberation Sans", sans-serif; }
.ucs path { fill: none; stroke: #d8d8d8; stroke-width: 1; }
.ucs text { fill: #c8c8c8; font: 15px "Liberation Sans", sans-serif; text-anchor: middle; }
.cross { fill: none; stroke: #d0d0d0; stroke-width: 1; }

.vscroll { display: flex; flex-direction: column; width: 16px; background: #f6f5f0; border-left: 1px solid #fff; }
.vscroll button, .hscroll button, .mini button, .prompt button {
  flex: none;
  width: 13px;
  height: 13px;
  border-radius: 2px;
  background: #c3d3fb;
}
.vscroll svg, .hscroll svg, .mini svg, .prompt svg { width: 11px; height: 11px; }
.vscroll .above { flex: 233; }
.vscroll .below { flex: 202; }
.thumb { width: 13px; height: 13px; border: 1px solid #a9bff0; border-radius: 2px; background: repeating-linear-gradient(90deg, #d2defc 0 2px, #a9bdf0 2px 3px); }

.tabs { display: flex; align-items: center; height: 18px; padding: 0 16px 5px 0; }
.step { width: 16px; height: 13px; border-right: 1px solid #c5c1ac; }
.step svg { width: 11px; height: 11px; }
.tab {
  height: 13px;
  padding: 0 4px;
  border: solid #333;
  border-width: 0 1px 1px;
  transform: skewX(-14deg);
  background: #f6f5ee;
  font: 9px "Liberation Sans", sans-serif;
}
.tab span { transform: skewX(14deg); }
.tab.on { background: #000; color: #fff; margin-left: 3px; }
.hscroll { display: flex; width: 302px; height: 13px; background: #f3f1e9; }
.hscroll .track { flex: 1; padding-left: 112px; }
.hscroll .thumb { display: block; }

.cmd { display: flex; align-items: stretch; height: 48px; padding: 3px 6px 3px 4px; border-top: 2px solid #77756a; background: #ece9d8; }
.cmd .grip { height: 36px; margin: 2px 4px 0 1px; }
.cmdbox { flex: 1; display: flex; flex-direction: column; min-width: 0; border: solid #555; border-width: 2px 0 0 1px; background: #fff; font: 11px/11px "Liberation Mono", monospace; }
.history { flex: 1; display: flex; }
.lines { flex: 1; }
.lines p { margin: 0; }
.mini { display: flex; flex-direction: column; }
.prompt { display: flex; align-items: center; height: 14px; padding-right: 16px; border-top: 1px solid #d4d1c2; }
.prompt input { flex: 1; min-width: 0; height: 12px; outline: none; }
.prompt .gap { width: 14px; height: 13px; background: #f6f5f0; }

.status { display: flex; align-items: center; height: 20px; padding: 0 2px 0 4px; gap: 1px; border-top: 2px solid #c0bda9; font: 10px "Roboto", sans-serif; }
.coords { width: 200px; height: 15px; padding: 1px 2px; border: 1px solid; border-color: #c5c1ac #fff #fff #c5c1ac; font: 9px "Liberation Sans", sans-serif; }
.toggle { height: 15px; padding: 0 2px; border: 1px solid; border-color: #fff #c5c1ac #c5c1ac #fff; }
.toggle.on { border-color: #333 #fff #fff #333; background: #f8f7f1; }
.pale { background: #f8f7f1; width: 16px; height: 14px; }

.taskbar {
  display: flex;
  align-items: center;
  height: 27px;
  color: #fff;
  background: linear-gradient(#0a2fa0 0, #3a7af0 10%, #245edb 20%, #2359d8 85%, #1a46b0 100%);
}
.start {
  width: 80px;
  height: 25px;
  gap: 5px;
  margin: 2px 8px 0 0;
  padding-right: 12px;
  border-radius: 0 9px 9px 0;
  background: linear-gradient(#6fbb6c 0, #3c933a 18%, #3a8f38 70%, #2a7427 100%);
  font: italic bold 14px "Open Sans", "Noto Sans", sans-serif;
  text-shadow: 1px 1px 1px #1c4a1a;
}
.start svg { width: 15px; height: 15px; }
.task {
  flex: 0 1 133px;
  min-width: 0;
  height: 22px;
  gap: 4px;
  padding: 0 8px;
  justify-content: flex-start;
  border-radius: 2px;
  background: linear-gradient(#4a90fb, #3a7ff2 20%, #3b80f3 85%, #2c65d4);
}
.task + .task { margin-left: 1px; }
.task.on { background: #1e50b4; }
.task svg { width: 13px; height: 13px; }
.tray {
  display: flex;
  align-items: center;
  gap: 3px;
  height: 25px;
  margin-top: 2px;
  padding-right: 14px;
  background: linear-gradient(#16a8f4, #0f8fea 25%, #1290e8 85%, #0c74c4);
}
.tray time { margin-left: 4px; }
.hide { width: 15px; height: 15px; margin-left: -8px; border-radius: 50%; background: radial-gradient(#58b4f4, #1b62d0); }
.hide svg { width: 11px; height: 11px; }
</style>
